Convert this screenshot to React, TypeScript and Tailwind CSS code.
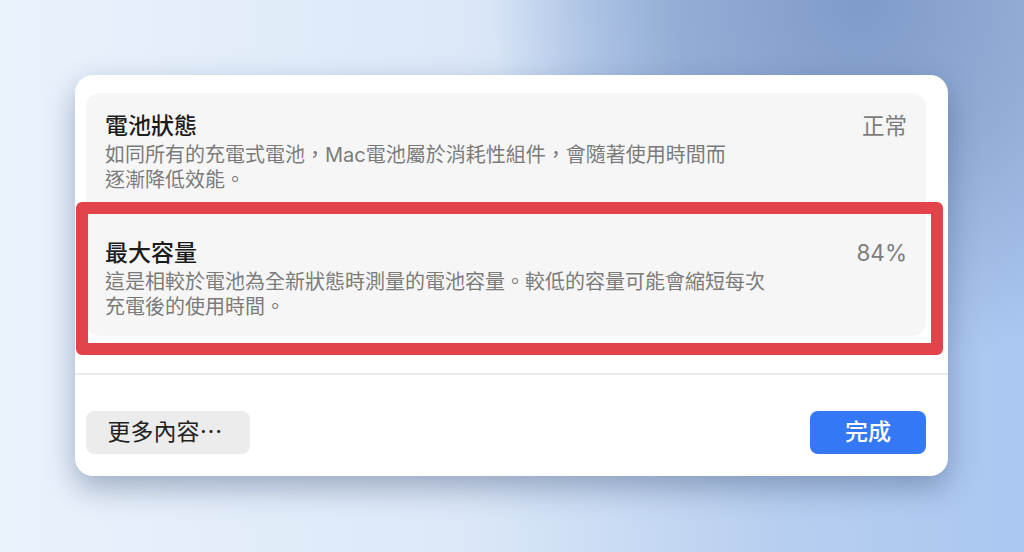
import type { ReactNode } from 'react';

const font = "font-['Inter','Noto_Sans_CJK_TC',sans-serif]";

function InfoRow({
  title,
  value,
  children,
  className,
}: {
  title: string;
  value: string;
  children: ReactNode;
  className: string;
}) {
  return (
    <div className={`flex items-start justify-between pl-[19px] pr-[19px] ${className}`}>
      <div>
        <div className="text-[23px] leading-[30px] font-medium text-[#1c1c1c]">{title}</div>
        <p className="mt-[2px] text-[20px] leading-[25px] text-[#7b7b7b]">{children}</p>
      </div>
      <div className="text-[22.5px] leading-[30px] text-[#7d7d7d]">{value}</div>
    </div>
  );
}

export default function App() {
  return (
    <div
      className={`${font} h-[552px] w-[1024px] overflow-hidden bg-[radial-gradient(ellipse_45%_85%_at_84%_0%,#7f9bc8_0%,#93add6_40%,transparent_80%),linear-gradient(90deg,#eaf2fc_0%,#dce8f8_45%,#b8cfef_75%,#a9c7f2_100%)] pl-[75px] pt-[75px]`}
    >
      <div className="relative w-[873px] rounded-[18px] bg-white pt-[18px] shadow-[0_12px_30px_rgba(50,70,110,0.4)]">
        {/* battery info group */}
        <div className="ml-[11px] mr-[22px] rounded-[14px] bg-[#f6f6f6]">
          <InfoRow title="電池狀態" value="正常" className="pt-[18px] pb-[26px]">
            如同所有的充電式電池，Mac電池屬於消耗性組件，會隨著使用時間而
            <br />
            逐漸降低效能。
          </InfoRow>
          <InfoRow title="最大容量" value="84%" className="pt-[19px] pb-[16px]">
            這是相較於電池為全新狀態時測量的電池容量。較低的容量可能會縮短每次
            <br />
            充電後的使用時間。
          </InfoRow>
        </div>

        {/* highlight annotation */}
        <div className="absolute left-[1px] top-[127px] h-[153px] w-[867px] rounded-[6px] border-[12px] border-[#e2434b]" />

        <div className="mt-[37px] h-[2px] bg-[#ebebeb]" />

        <div className="flex items-center justify-between pb-[22px] pl-[11px] pr-[22px] pt-[36px]">
          <button className="h-[43px] w-[164px] rounded-[8px] bg-[#ececec] pr-[6px] text-[23px] text-[#222]">
            更多內容⋯
          </button>
          <button className="h-[43px] w-[116px] rounded-[8px] bg-[#3478f6] text-[23px] font-medium text-white">
            完成
          </button>
        </div>
      </div>
    </div>
  );
}
